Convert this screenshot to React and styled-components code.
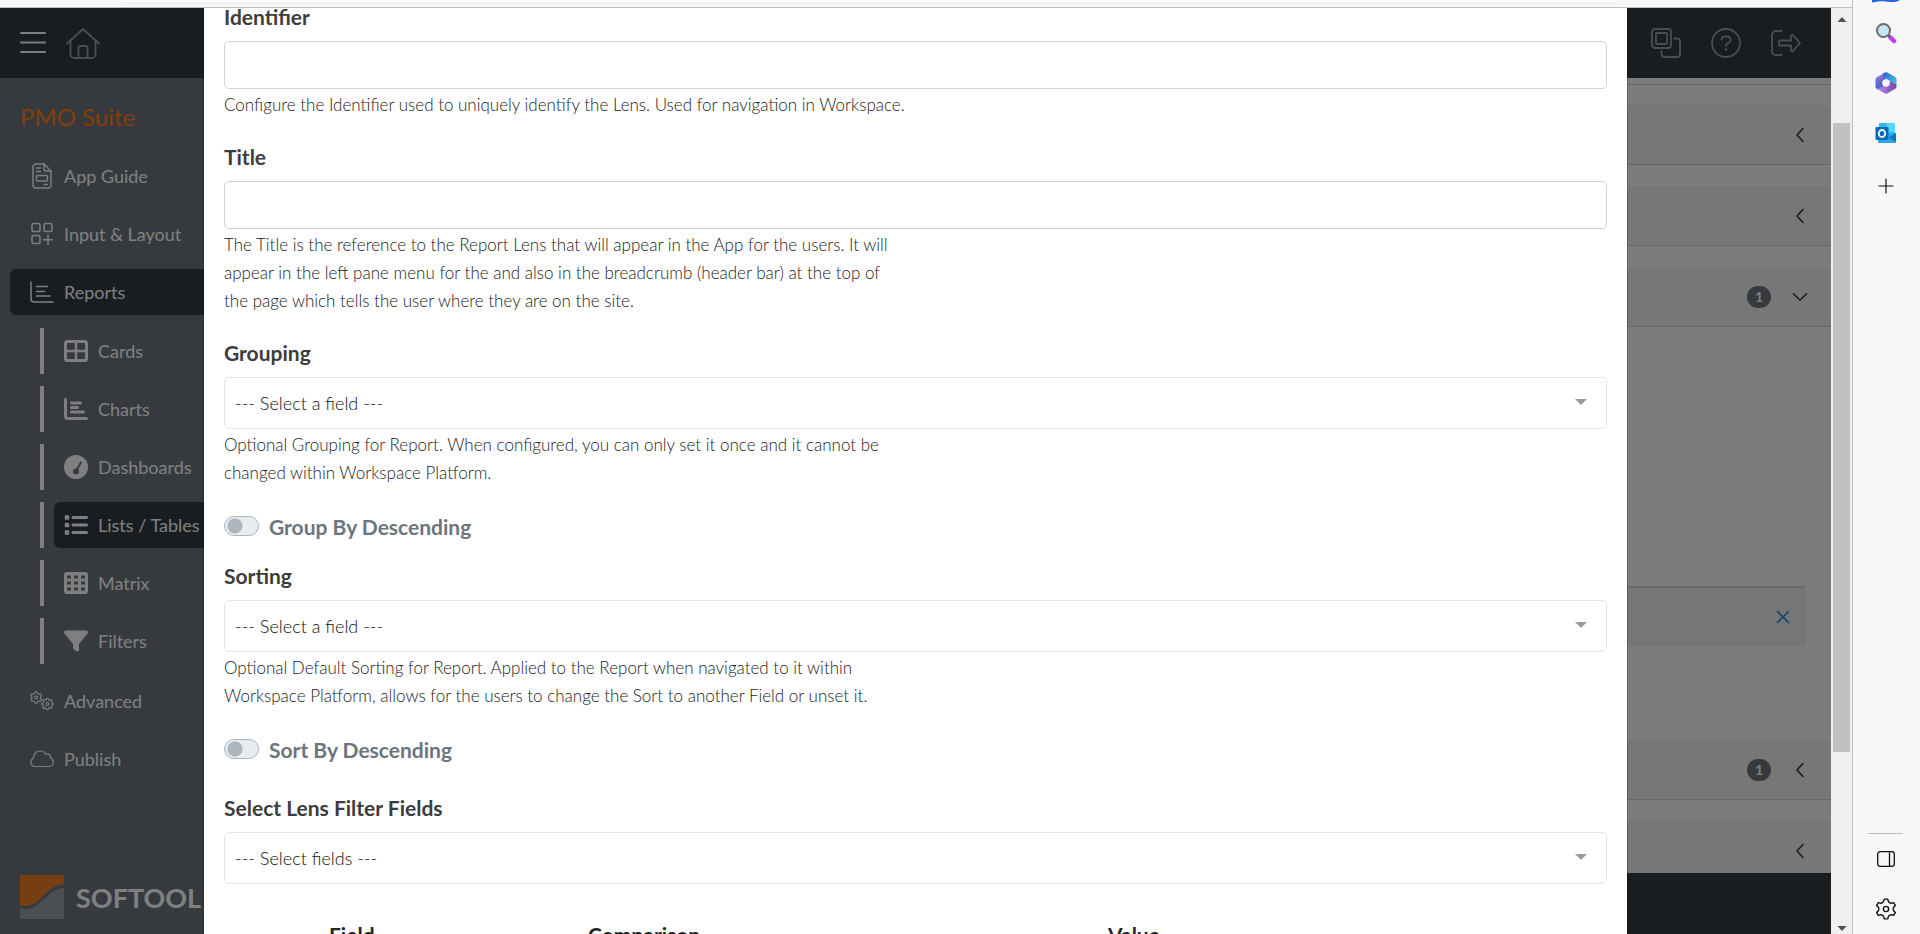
import React from 'react';
import styled, { createGlobalStyle, css } from 'styled-components';
import { FaFilter, FaList } from 'react-icons/fa6';

const FONT = "Lato, 'Open Sans', sans-serif";

const DARK = '#343a40';
const SLATE = '#6c757d';
const ORANGE = '#fd7e14';

const NAV_TOP = [
  { name: 'App Guide', icon: <GuideIcon /> },
  { name: 'Input & Layout', icon: <LayoutIcon /> },
  { name: 'Reports', icon: <ReportIcon />, active: true },
];

const NAV_REPORTS = [
  { name: 'Cards', icon: <CardsIcon /> },
  { name: 'Charts', icon: <ChartIcon /> },
  { name: 'Dashboards', icon: <DashboardIcon /> },
  { name: 'Lists / Tables', icon: <FaList size={24} />, active: true },
  { name: 'Matrix', icon: <MatrixIcon /> },
  { name: 'Filters', icon: <FaFilter size={24} /> },
];

const NAV_BOTTOM = [
  { name: 'Advanced', icon: <CogsIcon /> },
  { name: 'Publish', icon: <CloudIcon /> },
];

export default function App() {
  return (
    <>
      <GlobalStyle />
      <BrowserWindow>
        <Viewport>
          <AddressStrip>
            <AddressBar />
          </AddressStrip>
          <Frame>
            <Page>
              <Header />
              <PageBody>
                <Sidebar />
                <Content />
              </PageBody>
              <Backdrop>
                <LensModal />
              </Backdrop>
            </Page>
            <PageScrollbar />
          </Frame>
        </Viewport>
        <EdgeBar />
      </BrowserWindow>
    </>
  );
}

function Header() {
  return (
    <HeaderBar>
      <HeaderGroup>
        <IconButton aria-label="Menu">
          <svg width="26" height="24" viewBox="0 0 26 24" stroke="#fff" strokeWidth="2" strokeLinecap="round">
            <path d="M1 2h24M1 11.500h24M1 21h24" />
          </svg>
        </IconButton>
        <IconButton aria-label="Home">
          <HomeIcon />
        </IconButton>
      </HeaderGroup>
      <HeaderGroup $wide>
        <IconButton aria-label="Apps">
          <svg width="30" height="30" viewBox="0 0 30 30" fill="none" stroke="currentColor" strokeWidth="1.8" strokeLinejoin="round">
            <rect x="1" y="1" width="19" height="19" rx="3" />
            <rect x="5" y="5" width="11" height="11" rx="1" />
            <path d="M23 10.5h3a3 3 0 0 1 3 3V26a3 3 0 0 1-3 3H13.500a3 3 0 0 1-3-3v-3" strokeLinecap="round" />
          </svg>
        </IconButton>
        <IconButton aria-label="Help">
          <svg width="30" height="30" viewBox="0 0 30 30" fill="none" stroke="currentColor" strokeWidth="1.8" strokeLinecap="round">
            <circle cx="15" cy="15" r="14" />
            <path d="M10.500 11.500c0-2 1.700-3.200 4.500-3.200s4.600 1.500 4.600 3.700c0 3.200-4.600 3-4.600 5.800" />
            <circle cx="15" cy="21.500" r="1.300" fill="currentColor" stroke="none" />
          </svg>
        </IconButton>
        <IconButton aria-label="Log out">
          <svg width="30" height="30" viewBox="0 0 30 30" fill="none" stroke="currentColor" strokeWidth="1.8" strokeLinecap="round" strokeLinejoin="round">
            <path d="M10.500 3H5a4 4 0 0 0-4 4v16a4 4 0 0 0 4 4h5.500" />
            <path d="M9 12.500h11V7.500l1.500-.8L29 15l-7.500 8.300-1.500-.8v-5H9a1 1 0 0 1-1-1v-3a1 1 0 0 1 1-1z" />
          </svg>
        </IconButton>
      </HeaderGroup>
    </HeaderBar>
  );
}

function Sidebar() {
  return (
    <SidebarColumn>
      <AppName>PMO Suite</AppName>
      <NavList>
        {NAV_TOP.map((item) => (
          <NavItem key={item.name} {...item} />
        ))}
        <SubNav>
          {NAV_REPORTS.map(({ name, icon, active }) => (
            <SubRow key={name}>
              <SubLink href="#" $active={active}>
                <NavIcon>{icon}</NavIcon>
                {name}
              </SubLink>
            </SubRow>
          ))}
        </SubNav>
        {NAV_BOTTOM.map((item) => (
          <NavItem key={item.name} {...item} />
        ))}
      </NavList>
      <Brand>
        <svg width="44" height="44" viewBox="0 0 44 44">
          <path d="M0 0h44v9.500C29 8 20 31 6 31c-2.500 0-4.500-.5-6-1.500z" fill="#ea7e24" />
          <path d="M0 33c2 .8 4 1.200 6.500 1.200C20 34.200 30 12 44 13v31H0z" fill="#969da4" />
        </svg>
        <BrandName>SOFTOOL</BrandName>
      </Brand>
    </SidebarColumn>
  );
}

function NavItem({ name, icon, active }) {
  return (
    <NavLink href="#" $active={active}>
      <NavIcon>{icon}</NavIcon>
      {name}
    </NavLink>
  );
}

function Content() {
  return (
    <ContentColumn>
      <ContentArea>
        <Breadcrumb />
        <Panels>
          <AccordionPanel />
          <AccordionPanel />
          <div>
            <AccordionPanel count={1} open />
            <PanelBody>
              <PanelForm />
              <Alert>
                <IconButton aria-label="Remove">
                  <svg width="14" height="14" viewBox="0 0 14 14" stroke="#2f80e8" strokeWidth="1.6">
                    <path d="M1 1l12 12M13 1L1 13" />
                  </svg>
                </IconButton>
              </Alert>
            </PanelBody>
            <AccordionPanel count={1} />
          </div>
          <AccordionPanel />
        </Panels>
      </ContentArea>
      <Footer />
    </ContentColumn>
  );
}

function AccordionPanel({ count, open }) {
  return (
    <PanelHead aria-label="Section">
      {count && <Badge>{count}</Badge>}
      <svg width="16" height="16" viewBox="0 0 16 16" fill="none" stroke="#3a3a3a" strokeWidth="1.7" strokeLinecap="round" strokeLinejoin="round">
        <path d={open ? 'M1.500 5L8 11 14.500 5' : 'M11 1.500L5 8l6 6.500'} />
      </svg>
    </PanelHead>
  );
}

function LensModal() {
  return (
    <Modal role="dialog" aria-label="Report Lens">
      <Field>
        <Label htmlFor="identifier">Identifier</Label>
        <TextInput id="identifier" />
        <Help>Configure the Identifier used to uniquely identify the Lens. Used for navigation in Workspace.</Help>
      </Field>
      <Field>
        <Label htmlFor="title">Title</Label>
        <TextInput id="title" />
        <Help>
          The Title is the reference to the Report Lens that will appear in the App for the users. It will
          <br />
          appear in the left pane menu for the and also in the breadcrumb (header bar) at the top of
          <br />
          the page which tells the user where they are on the site.
        </Help>
      </Field>
      <Field>
        <Label htmlFor="grouping">Grouping</Label>
        <SelectField id="grouping" text="--- Select a field ---" />
        <Help>
          Optional Grouping for Report. When configured, you can only set it once and it cannot be
          <br />
          changed within Workspace Platform.
        </Help>
      </Field>
      <SwitchLabel>
        <SwitchInput type="checkbox" />
        Group By Descending
      </SwitchLabel>
      <Field>
        <Label htmlFor="sorting">Sorting</Label>
        <SelectField id="sorting" text="--- Select a field ---" />
        <Help>
          Optional Default Sorting for Report. Applied to the Report when navigated to it within
          <br />
          Workspace Platform, allows for the users to change the Sort to another Field or unset it.
        </Help>
      </Field>
      <SwitchLabel>
        <SwitchInput type="checkbox" />
        Sort By Descending
      </SwitchLabel>
      <Field $section>
        <Label htmlFor="filters">Select Lens Filter Fields</Label>
        <SelectField id="filters" text="--- Select fields ---" />
      </Field>
      <FilterTable>
        <thead>
          <tr>
            <FilterHead $width={97} />
            <FilterHead $width={259}>Field</FilterHead>
            <FilterHead $width={520}>Comparison</FilterHead>
            <FilterHead>Value</FilterHead>
          </tr>
        </thead>
      </FilterTable>
    </Modal>
  );
}

function SelectField({ id, text }) {
  return (
    <SelectWrap>
      <Select id={id}>
        <option>{text}</option>
      </Select>
      <Caret viewBox="0 0 12 6">
        <path d="M0 0h12L6 6z" fill="#999" />
      </Caret>
    </SelectWrap>
  );
}

function PageScrollbar() {
  return (
    <Scrollbar>
      <svg width="10" height="22" viewBox="0 0 10 22">
        <path d="M0.500 14L5 9l4.500 5z" fill="#505050" />
      </svg>
      <Track>
        <Thumb />
      </Track>
      <svg width="10" height="12" viewBox="0 0 10 12">
        <path d="M0.500 4h9L5 9z" fill="#505050" />
      </svg>
    </Scrollbar>
  );
}

function EdgeBar() {
  return (
    <EdgeColumn>
      <svg width="32" height="3" viewBox="0 0 32 3">
        <path d="M2 0h28c-2 1.500-5 2.200-9 2-6-.3-8-1-13-.4L2 2.500z" fill="#2463dc" />
      </svg>
      <EdgeGroup>
        <EdgeButton aria-label="Search">
          <svg width="22" height="22" viewBox="0 0 22 22">
            <path d="M15.500 15.500l3.500 3.500" stroke="#c23cf5" strokeWidth="4.500" strokeLinecap="round" />
            <path d="M12 12l3 3" stroke="#666" strokeWidth="2.500" />
            <circle cx="8.500" cy="8.500" r="6.500" fill="#c4e6fa" stroke="#6b6b6b" strokeWidth="2" />
          </svg>
        </EdgeButton>
        <EdgeButton aria-label="Microsoft 365">
          <svg width="22" height="22" viewBox="0 0 22 22">
            <defs>
              <linearGradient id="m365a" x1="0" y1="0" x2="0" y2="1">
                <stop offset="0" stopColor="#a774dc" />
                <stop offset="1" stopColor="#3964c8" />
              </linearGradient>
              <linearGradient id="m365b" x1="0" y1="0" x2="1" y2="1">
                <stop offset="0" stopColor="#2760c8" />
                <stop offset="1" stopColor="#45cdf5" />
              </linearGradient>
              <linearGradient id="m365c" x1="0" y1="0" x2="1" y2="0">
                <stop offset="0" stopColor="#c48be8" />
                <stop offset="1" stopColor="#7447a8" />
              </linearGradient>
            </defs>
            <path d="M11 0L1.700 5.300Q.5 6 .5 7.500v7q0 1.600 1.200 2.300L4 18l4-3V5z" fill="url(#m365a)" />
            <path d="M8 4.500V1.600L10.200.4q1-.6 2 0l8 4.700q1.300.8 1.300 2.200V13l-7-4-3-2-3.500 2z" fill="url(#m365b)" />
            <path d="M2 17l7-3 5-1 1-4 6.500 3.500v2q0 1.500-1.200 2.200l-8 4.800q-1 .6-2.200 0z" fill="url(#m365c)" />
            <circle cx="11" cy="11" r="3.700" fill="#f7f7f7" />
          </svg>
        </EdgeButton>
        <EdgeButton aria-label="Outlook">
          <svg width="22" height="22" viewBox="0 0 22 22">
            <rect x="4" y="1" width="16" height="14" rx="1" fill="#32b5ee" />
            <path d="M12 1h7a1 1 0 0 1 1 1v8h-8z" fill="#50d9ff" />
            <path d="M3 13l18-2v9a1 1 0 0 1-1 1H4a1 1 0 0 1-1-1z" fill="#28a8ea" />
            <path d="M21 11v9l-7-4.500z" fill="#1274bd" />
            <rect x="0.500" y="5" width="13" height="13" rx="1.200" fill="#0a68b8" />
            <ellipse cx="7" cy="11.500" rx="3.200" ry="3.500" fill="none" stroke="#fff" strokeWidth="1.800" />
          </svg>
        </EdgeButton>
        <EdgeButton aria-label="Add" $tall>
          <svg width="16" height="16" viewBox="0 0 16 16" stroke="#111" strokeWidth="1.200">
            <path d="M8 .5v15M.5 8h15" />
          </svg>
        </EdgeButton>
      </EdgeGroup>
      <EdgeGroup $bottom>
        <EdgeDivider />
        <EdgeButton aria-label="Side pane">
          <svg width="18" height="16" viewBox="0 0 18 16" fill="none" stroke="#111" strokeWidth="1.300">
            <rect x="0.700" y="0.700" width="16.600" height="14.600" rx="2.500" />
            <path d="M12.500 1v14" />
          </svg>
        </EdgeButton>
        <EdgeButton aria-label="Settings">
          <svg width="22" height="22" viewBox="0 0 22 22" fill="none" stroke="#111" strokeWidth="1.400" strokeLinejoin="round">
            <path d={gearPath(11, 11, 10, 7.5, 6)} />
            <circle cx="11" cy="11" r="2.600" />
          </svg>
        </EdgeButton>
      </EdgeGroup>
    </EdgeColumn>
  );
}

// outline of a gear: every tooth is a flat top with slanted sides
function gearPath(cx, cy, outer, inner, teeth) {
  const step = (Math.PI * 2) / teeth;
  const points = [];
  for (let i = 0; i < teeth; i++) {
    const a = i * step - Math.PI / 2;
    [
      [-0.32, inner],
      [-0.17, outer],
      [0.17, outer],
      [0.32, inner],
    ].forEach(([k, r]) => {
      points.push(`${(cx + r * Math.cos(a + k * step)).toFixed(2)} ${(cy + r * Math.sin(a + k * step)).toFixed(2)}`);
    });
  }
  return `M${points.join('L')}Z`;
}

function HomeIcon() {
  return (
    <svg width="34" height="31" viewBox="0 0 34 31" fill="none" stroke="currentColor" strokeWidth="1.800" strokeLinecap="round" strokeLinejoin="round">
      <path d="M1 15.500L17 1l16 14.500" />
      <path d="M4.500 13v13a4 4 0 0 0 4 4h17a4 4 0 0 0 4-4V13" />
      <path d="M12.500 30V19.500a1.500 1.500 0 0 1 1.500-1.500h6a1.500 1.500 0 0 1 1.500 1.500V30" />
    </svg>
  );
}

function GuideIcon() {
  return (
    <svg width="20" height="26" viewBox="0 0 20 26" fill="none" stroke="currentColor" strokeWidth="1.400" strokeLinecap="round" strokeLinejoin="round">
      <path d="M12 1H4a3 3 0 0 0-3 3v18a3 3 0 0 0 3 3h12a3 3 0 0 0 3-3V8z" />
      <path d="M12 1v5a2 2 0 0 0 2 2h5M4.500 5h4M4.500 8.500h4M12 21.500h3.500" />
      <rect x="4.500" y="12.500" width="11" height="5.500" rx="1" />
    </svg>
  );
}

function LayoutIcon() {
  return (
    <svg width="24" height="24" viewBox="0 0 24 24" fill="none" stroke="currentColor" strokeWidth="1.500" strokeLinecap="round">
      <rect x="2" y="1.500" width="8" height="8" rx="1.500" />
      <rect x="14" y="1.500" width="8" height="8" rx="1.500" />
      <rect x="2" y="13.500" width="8" height="8" rx="1.500" />
      <path d="M18 13v9.500M13.500 17.700h9" />
    </svg>
  );
}

function ReportIcon() {
  return (
    <svg width="24" height="22" viewBox="0 0 24 22" fill="none" stroke="currentColor" strokeWidth="1.500" strokeLinecap="round">
      <path d="M1 1v17a3 3 0 0 0 3 3h19M6.500 5.500h11M6.500 10.500h8M6.500 15h13.500" />
    </svg>
  );
}

function CardsIcon() {
  return (
    <svg width="24" height="22" viewBox="0 0 24 22" fill="none" stroke="currentColor" strokeWidth="3">
      <rect x="1.500" y="1.500" width="21" height="19" rx="2" />
      <path d="M12 1v20M1 11h22" strokeWidth="2.500" />
    </svg>
  );
}

function ChartIcon() {
  return (
    <svg width="24" height="22" viewBox="0 0 24 22" fill="none" stroke="currentColor" strokeWidth="3" strokeLinecap="round">
      <path d="M1.500 1.500V18a2.500 2.500 0 0 0 2.500 2.500h18.500M7.500 5h9M7.500 9.500h6M7.500 14h12" />
    </svg>
  );
}

function DashboardIcon() {
  return (
    <svg width="24" height="24" viewBox="0 0 24 24">
      <circle cx="12" cy="12" r="12" fill="currentColor" />
      <path d="M12 16L17 7.500" stroke={SLATE} strokeWidth="2" strokeLinecap="round" />
      <circle cx="12" cy="16.500" r="3" fill={SLATE} />
    </svg>
  );
}

function MatrixIcon() {
  return (
    <svg width="24" height="22" viewBox="0 0 24 22">
      <rect width="24" height="22" rx="3" fill="currentColor" />
      {[3, 10, 17].map((x) =>
        [3.5, 9.500, 15.500].map((y) => <rect key={`${x}-${y}`} x={x} y={y} width="4" height="3" fill={SLATE} />)
      )}
    </svg>
  );
}

function CogsIcon() {
  return (
    <svg width="24" height="20" viewBox="0 0 24 20" fill="none" stroke="currentColor" strokeWidth="1.100" strokeLinejoin="round">
      <path d={gearPath(6.2, 6.5, 5.8, 4.4, 6)} />
      <circle cx="6.200" cy="6.500" r="1.500" />
      <path d={gearPath(17.500, 13, 5.8, 4.4, 8)} />
      <circle cx="17.500" cy="13" r="1.500" />
    </svg>
  );
}

function CloudIcon() {
  return (
    <svg width="24" height="18" viewBox="0 0 24 18" fill="none" stroke="currentColor" strokeWidth="1.200" strokeLinejoin="round">
      <path d="M5 16.500a4.300 4.300 0 0 1-1.500-8.300C3.400 4 6.500 1 10 1c2.600 0 4.600 1.200 5.700 3.300 2.700-1.200 5.300.7 4.700 3.700 1.700.6 2.900 2.100 2.900 4.200 0 2.500-1.900 4.300-4.300 4.300z" />
    </svg>
  );
}

const GlobalStyle = createGlobalStyle`
  * {
    box-sizing: border-box;
  }

  body {
    margin: 0;
    font-family: ${FONT};
    color: #3d3d3d;
    overflow: hidden;
  }

  button {
    border: 0;
    padding: 0;
    background: none;
    font-family: inherit;
  }
`;

const BrowserWindow = styled.div`
  display: flex;
  height: 100vh;
  background-color: #f7f7f7;
`;

const Viewport = styled.div`
  flex: 1;
  min-width: 0;
  display: flex;
  flex-direction: column;
  border-right: 1px solid #bdbdbd;
`;

const AddressStrip = styled.div`
  height: 8px;
  padding: 0 235px 0 125px;
  background-color: #f7f7f7;
  border-bottom: 1px solid #bdbdbd;
`;

const AddressBar = styled.div`
  height: 2px;
  background-color: #fff;
  border-radius: 0 0 12px 12px;
  box-shadow: 0 1px 2px rgba(0, 0, 0, 0.05);
`;

const Frame = styled.div`
  flex: 1;
  min-height: 0;
  display: flex;
`;

const Page = styled.div`
  flex: 1;
  min-width: 0;
  position: relative;
  display: flex;
  flex-direction: column;
  background-color: #f8f8f8;
  overflow: hidden;
`;

const HeaderBar = styled.header`
  height: 70px;
  flex-shrink: 0;
  padding: 0 30px 0 20px;
  display: flex;
  align-items: center;
  justify-content: space-between;
  background-color: ${DARK};
  color: #989b9e;
`;

const HeaderGroup = styled.div`
  display: flex;
  align-items: center;
  gap: ${({ $wide }) => ($wide ? 30 : 20)}px;
`;

const IconButton = styled.button`
  display: flex;
  color: inherit;
`;

const PageBody = styled.div`
  flex: 1;
  min-height: 0;
  display: flex;
`;

const SidebarColumn = styled.aside`
  width: 260px;
  flex-shrink: 0;
  padding: 20px 10px 15px;
  display: flex;
  flex-direction: column;
  background-color: ${SLATE};
  color: #fff;
`;

const AppName = styled.h1`
  margin: 0 10px 17px;
  font-size: 24px;
  font-weight: 400;
  line-height: 38px;
  color: ${ORANGE};
`;

const NavList = styled.nav`
  display: flex;
  flex-direction: column;
  gap: 12px;
`;

const linkStyle = css`
  height: 46px;
  display: flex;
  align-items: center;
  gap: 10px;
  border-radius: 6px;
  font-size: 18px;
  color: #fff;
  text-decoration: none;
  white-space: nowrap;
  background-color: ${({ $active }) => ($active ? DARK : 'transparent')};
`;

const NavLink = styled.a`
  ${linkStyle}
  padding-left: 20px;
`;

const SubNav = styled.div`
  padding: 1px 0 2px 30px;
  display: flex;
  flex-direction: column;
  gap: 12px;
`;

const SubRow = styled.div`
  border-left: 4px solid #fff;
  padding-left: 10px;
`;

const SubLink = styled.a`
  ${linkStyle}
  padding-left: 10px;
`;

const NavIcon = styled.span`
  width: 24px;
  display: flex;
  justify-content: center;
`;

const Brand = styled.div`
  margin: auto 10px 0;
  display: flex;
  align-items: center;
  gap: 12px;
`;

const BrandName = styled.span`
  font-size: 27px;
  font-weight: 700;
`;

const ContentColumn = styled.main`
  flex: 1;
  min-width: 0;
  display: flex;
  flex-direction: column;
`;

const ContentArea = styled.div`
  flex: 1;
  min-height: 0;
  overflow: hidden;
`;

const Breadcrumb = styled.div`
  height: 7px;
  border-bottom: 1px solid #cfcfcf;
`;

const Panels = styled.div`
  padding-top: 20px;
  display: flex;
  flex-direction: column;
  gap: 21px;
`;

const PanelHead = styled.button`
  width: 100%;
  height: 60px;
  padding: 0 23px;
  display: flex;
  align-items: center;
  justify-content: flex-end;
  gap: 21px;
  background-color: #efefef;
  border-bottom: 1px solid #cfcfcf;
  border-radius: 6px 6px 0 0;
`;

const Badge = styled.span`
  width: 24px;
  height: 22px;
  border-radius: 11px;
  background-color: ${SLATE};
  color: #fff;
  font-size: 14px;
  font-weight: 700;
  line-height: 22px;
  text-align: center;
`;

const PanelBody = styled.div`
  padding: 0 25px 94px;
`;

const PanelForm = styled.div`
  height: 259px;
`;

const Alert = styled.div`
  height: 60px;
  padding: 0 16px;
  display: flex;
  align-items: center;
  justify-content: flex-end;
  background-color: #e8eeeb;
  border-top: 2px solid #d4d8d6;
`;

const Footer = styled.footer`
  height: 61px;
  flex-shrink: 0;
  background-color: ${DARK};
`;

const Backdrop = styled.div`
  position: absolute;
  inset: 0;
  display: flex;
  justify-content: center;
  background-color: rgba(0, 0, 0, 0.5);
`;

const Modal = styled.div`
  width: calc(100% - 408px);
  padding: 0 20px;
  background-color: #fff;
  box-shadow: 0 0 0 1px rgba(0, 0, 0, 0.2);
  overflow: hidden;
`;

const Field = styled.div`
  margin-bottom: 29px;
  padding-top: ${({ $section }) => ($section ? 9 : 0)}px;
`;

const Label = styled.label`
  display: block;
  margin-bottom: 15px;
  font-size: 21px;
  font-weight: 700;
  line-height: 18px;
`;

const TextInput = styled.input`
  display: block;
  width: 100%;
  height: 48px;
  padding: 0 12px;
  border: 1px solid #ced4da;
  border-radius: 5px;
  font-family: inherit;
  font-size: 18px;
`;

const Help = styled.p`
  margin: 2px 0 0;
  color: #222;
  font-size: 17px;
  font-weight: 300;
  line-height: 28px;
`;

const SelectWrap = styled.div`
  position: relative;
`;

const Select = styled.select`
  display: block;
  width: 100%;
  height: 52px;
  padding: 0 40px 0 10px;
  appearance: none;
  border: 1px solid #e5e5e5;
  border-radius: 5px;
  background-color: #fff;
  color: #111;
  font-family: inherit;
  font-size: 18px;
  font-weight: 300;
`;

const Caret = styled.svg`
  position: absolute;
  top: 22px;
  right: 20px;
  width: 12px;
  height: 6px;
  pointer-events: none;
`;

const SwitchLabel = styled.label`
  height: 20px;
  margin-bottom: 31px;
  display: flex;
  align-items: center;
  gap: 10px;
  color: ${SLATE};
  font-size: 21px;
  font-weight: 700;
`;

const SwitchInput = styled.input`
  appearance: none;
  width: 35px;
  height: 20px;
  margin: 0;
  border: 1px solid #adb5bd;
  border-radius: 10px;
  background: radial-gradient(circle at 10px 9px, #adb5bd 7px, transparent 8px) #e9ecef;
`;

const FilterTable = styled.table`
  width: 100%;
  table-layout: fixed;
  border-collapse: collapse;
`;

const FilterHead = styled.th`
  width: ${({ $width }) => ($width ? `${$width}px` : 'auto')};
  padding: 8px;
  color: #212529;
  font-size: 21px;
  font-weight: 700;
  line-height: 28px;
  text-align: left;
`;

const Scrollbar = styled.div`
  width: 21px;
  flex-shrink: 0;
  display: flex;
  flex-direction: column;
  align-items: center;
  background-color: #f0f0f0;
`;

const Track = styled.div`
  flex: 1;
  width: 100%;
  padding: 0 2px;
  display: grid;
  grid-template-rows: 93fr 629fr 170fr;
`;

const Thumb = styled.div`
  grid-row: 2;
  background-color: #c1c1c1;
`;

const EdgeColumn = styled.aside`
  width: 67px;
  flex-shrink: 0;
  padding-right: 2px;
  display: flex;
  flex-direction: column;
  align-items: center;
  background-color: #f7f7f7;
`;

const EdgeGroup = styled.div`
  display: flex;
  flex-direction: column;
  align-items: center;
  ${({ $bottom }) => ($bottom ? 'margin-top: auto;' : 'margin-top: 5px;')}
`;

const EdgeButton = styled.button`
  width: 40px;
  height: ${({ $tall }) => ($tall ? 56 : 50)}px;
  display: flex;
  align-items: center;
  justify-content: center;
`;

const EdgeDivider = styled.hr`
  width: 35px;
  margin: 0;
  border: 0;
  border-top: 1px solid #bdbdbd;
`;
